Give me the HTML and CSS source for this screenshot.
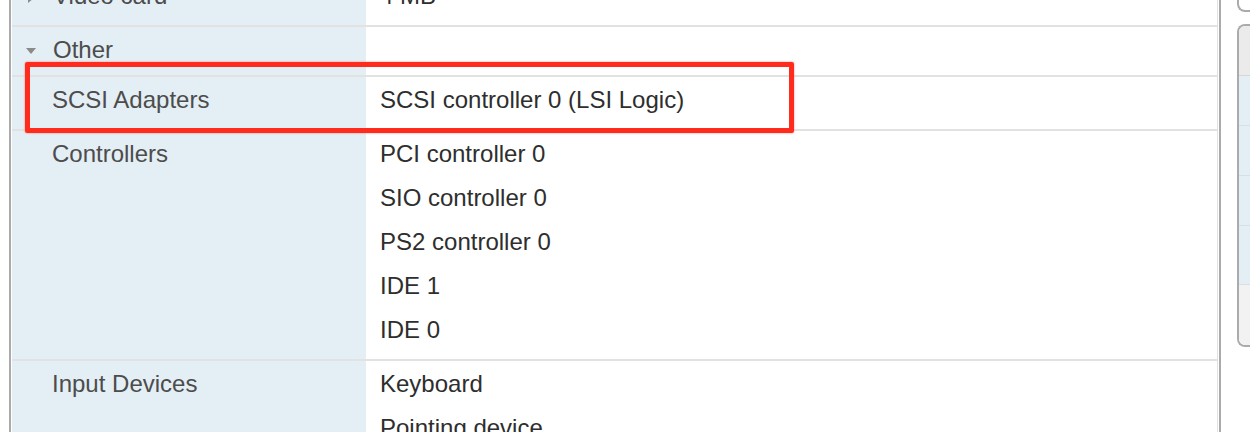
FILE: index.html
```html
<!DOCTYPE html>
<html>
  <head>
    <meta charset="utf-8">
    <title>VM Hardware</title>
    <link rel="stylesheet" href="styles.css">
  </head>
  <body>
    <div class="page">
      <div class="hardware">
        <div class="grid">
          <div class="row">
            <div class="label group"><span class="tri closed"></span>Video card</div>
            <div class="value"><div>4 MB</div></div>
          </div>
          <div class="row head">
            <div class="label group"><span class="tri open"></span>Other</div>
            <div class="value"></div>
          </div>
          <div class="row">
            <div class="label">SCSI Adapters</div>
            <div class="value"><div>SCSI controller 0 (LSI Logic)</div></div>
          </div>
          <div class="row">
            <div class="label">Controllers</div>
            <div class="value">
              <div>PCI controller 0</div>
              <div>SIO controller 0</div>
              <div>PS2 controller 0</div>
              <div>IDE 1</div>
              <div>IDE 0</div>
            </div>
          </div>
          <div class="row">
            <div class="label">Input Devices</div>
            <div class="value">
              <div>Keyboard</div>
              <div>Pointing device</div>
            </div>
          </div>
        </div>
        <!-- annotation drawn over the SCSI row -->
        <div class="mark"></div>
      </div>

      <div class="side">
        <div class="tab"></div>
        <div class="panel">
          <div class="panel-head"></div>
          <div class="panel-rows">
            <div class="panel-row"></div>
            <div class="panel-row"></div>
            <div class="panel-row"></div>
            <div class="panel-row"></div>
          </div>
          <div class="panel-foot"></div>
        </div>
      </div>
    </div>
  </body>
</html>
```

FILE: styles.css
```css
html, body {
  margin     : 0;
  padding    : 0;
  background : #fff;
  overflow   : hidden;
}
body {
  font-family : "Liberation Sans", Arial, sans-serif;
  font-size   : 24px;
  width       : 1250px;
  height      : 432px;
}
.page {
  display     : flex;
  align-items : flex-start;
}

.hardware {
  position     : relative;
  flex         : none;
  margin-left  : 9px;
  margin-top   : -27px;
  width        : 1206px;
  padding      : 0 1px;
  border-left  : 2px solid #ababab;
  border-right : 2px solid #ababab;
  height       : 470px;
}
.grid {
  border-right : 1px solid #e2e2e2;
  height       : 100%;
  background   : linear-gradient(to right, #e4eef5 354px, #fff 354px);
}
.row {
  display       : flex;
  border-bottom : 2px solid #e2e2e2;
}
.label {
  width        : 354px;
  flex         : none;
  box-sizing   : border-box;
  padding      : 1px 0 7px 40px;
  line-height  : 44px;
  color        : #4c4c4c;
}
.label.group {
  padding-left : 14px;
}
.value {
  flex        : 1;
  padding     : 1px 0 7px 14px;
  line-height : 44px;
  color       : #2e2e2e;
}
.row.head .label,
.row.head .value {
  padding-bottom : 3px;
}

.tri {
  display        : inline-block;
  width          : 0;
  height         : 0;
  vertical-align : middle;
  margin-right   : 17px;
}
.tri.open {
  border-left  : 5px solid transparent;
  border-right : 5px solid transparent;
  border-top   : 6px solid #8a8a8a;
  margin-top   : -2px;
}
.tri.closed {
  border-top    : 5px solid transparent;
  border-bottom : 5px solid transparent;
  border-left   : 6px solid #8a8a8a;
  margin-left   : 2px;
  margin-right  : 19px;
}

.mark {
  position      : absolute;
  left          : 14px;
  top           : 89px;
  width         : 769px;
  height        : 71px;
  box-sizing    : border-box;
  border        : 5px solid #ff2b1c;
  border-radius : 2px;
  box-shadow    : 0 0 2px rgba(255, 40, 20, 0.6);
}

.side {
  flex        : none;
  margin-left : 16px;
  width       : 20px;
}
.tab {
  margin-top    : -20px;
  height        : 28px;
  border        : 2px solid #ababab;
  border-right  : none;
  border-radius : 0 0 0 8px;
  background    : #fff;
}
.panel {
  margin-top    : 12px;
  border        : 2px solid #ababab;
  border-right  : none;
  border-radius : 8px 0 0 8px;
  overflow      : hidden;
}
.panel-head {
  height        : 49px;
  background    : #ebebeb;
  border-bottom : 1px solid #d6d6d6;
}
.panel-row {
  height        : 49px;
  background    : #e4eef5;
  border-bottom : 1px solid #d9dfe4;
}
.panel-row:last-child {
  height : 58px;
}
.panel-foot {
  height     : 60px;
  background : #f2f2f2;
}
```
